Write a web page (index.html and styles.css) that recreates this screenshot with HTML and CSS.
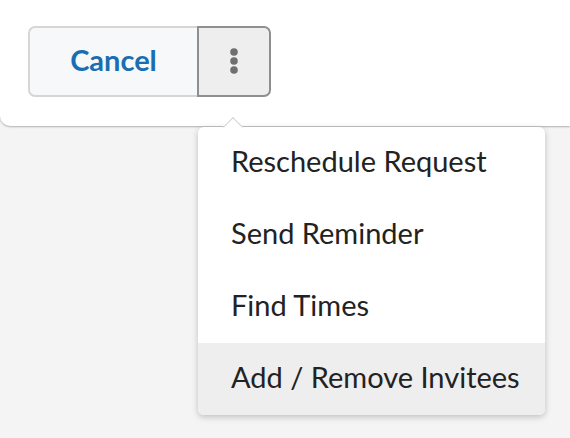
FILE: index.html
```html
<!DOCTYPE html>
<html>
<head>
<meta charset="utf-8">
<link rel="stylesheet" href="styles.css">
</head>
<body>
<div class="panel">
  <div class="btn-group">
    <button class="btn cancel">Cancel</button>
    <button class="btn more" aria-label="More actions">
      <svg width="10" height="28" viewBox="0 0 10 28"><circle cx="5" cy="5" r="3.8" fill="#6f6f6f"/><circle cx="5" cy="14" r="3.8" fill="#6f6f6f"/><circle cx="5" cy="23" r="3.8" fill="#6f6f6f"/></svg>
    </button>
  </div>
</div>
<div class="menu">
  <span class="caret"></span>
  <div class="item">Reschedule Request</div>
  <div class="item">Send Reminder</div>
  <div class="item">Find Times</div>
  <div class="item active">Add / Remove Invitees</div>
</div>
</body>
</html>
```
FILE: styles.css
```css
html, body {
  margin: 0;
  padding: 0;
}
body {
  background: #f4f4f4;
  width: 570px;
  height: 438px;
  overflow: hidden;
  position: relative;
  font-family: Lato, "Noto Sans", sans-serif;
}
.panel {
  background: #fff;
  height: 126px;
  box-sizing: border-box;
  padding: 26px 28px 0;
  border-bottom-left-radius: 10px;
  box-shadow: 0 1px 2px rgba(0, 0, 0, 0.28);
  position: relative;
  z-index: 1;
}
.btn-group {
  display: flex;
}
.btn {
  height: 71px;
  box-sizing: border-box;
  margin: 0;
  font-family: inherit;
  display: flex;
  align-items: center;
  justify-content: center;
  padding: 0;
}
.cancel {
  width: 169px;
  background: #f6f8fa;
  border: 2px solid #d6d6d6;
  border-right: none;
  border-radius: 7px 0 0 7px;
  color: #1b6db3;
  font-size: 29px;
  font-weight: 700;
  padding-bottom: 5px;
}
.more {
  width: 74px;
  background: #eeeeee;
  border: 2px solid #8f8f8f;
  border-radius: 0 7px 7px 0;
  padding-bottom: 2px;
}
.menu {
  position: absolute;
  left: 198px;
  top: 127px;
  width: 347px;
  background: #fff;
  border-radius: 6px;
  box-shadow: 0 2px 6px rgba(0, 0, 0, 0.22);
  z-index: 2;
}
.caret {
  position: absolute;
  left: 28px;
  top: -7px;
  width: 13px;
  height: 13px;
  background: #fff;
  border-top: 1px solid #d4d4d4;
  border-left: 1px solid #d4d4d4;
  transform: rotate(45deg);
}
.item {
  height: 72px;
  box-sizing: border-box;
  display: flex;
  align-items: center;
  padding-left: 33px;
  padding-bottom: 5px;
  font-size: 29px;
  color: #222;
  position: relative;
}
.item.active {
  background: #eeeeee;
  border-radius: 0 0 6px 6px;
}
```
